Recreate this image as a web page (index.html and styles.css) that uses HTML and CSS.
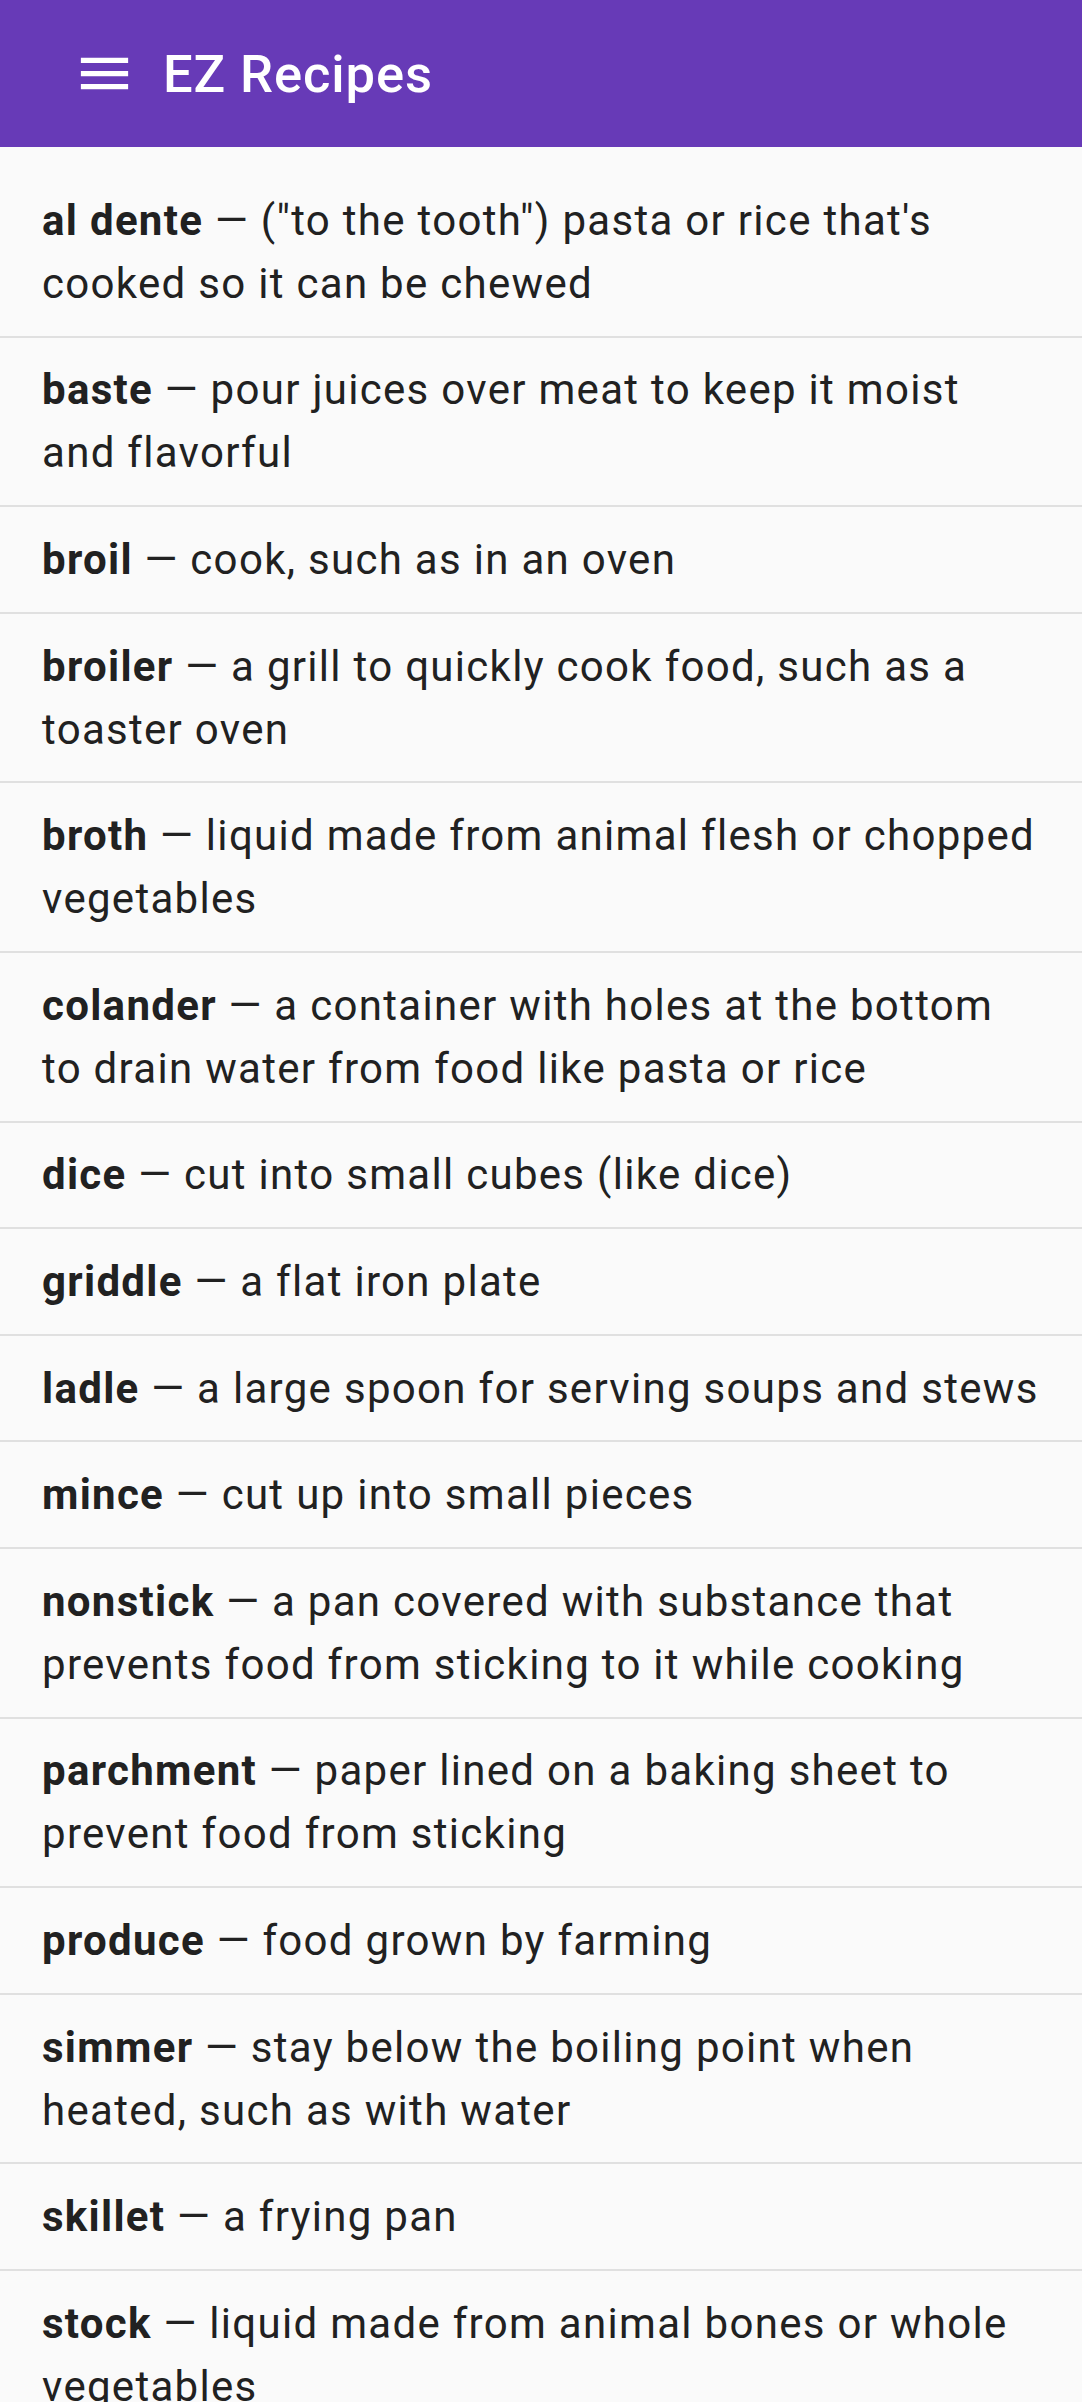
FILE: index.html
```html
<!DOCTYPE html>
<html lang="en">
<head>
<meta charset="utf-8">
<title>EZ Recipes</title>
<link rel="stylesheet" href="styles.css">
</head>
<body>
<header class="appbar">
  <button class="menu-btn" aria-label="Menu">
    <svg viewBox="0 0 24 24" width="63" height="63"><path d="M3 18h18v-2H3v2zm0-5h18v-2H3v2zm0-7v2h18V6H3z" fill="#ffffff"/></svg>
  </button>
  <h1 class="title">EZ Recipes</h1>
</header>
<main class="list">
  <div class="item"><b>al dente</b> — ("to the tooth") pasta or rice that's cooked so it can be chewed</div>
  <div class="item"><b>baste</b> — pour juices over meat to keep it moist and flavorful</div>
  <div class="item"><b>broil</b> — cook, such as in an oven</div>
  <div class="item"><b>broiler</b> — a grill to quickly cook food, such as a toaster oven</div>
  <div class="item"><b>broth</b> — liquid made from animal flesh or chopped vegetables</div>
  <div class="item"><b>colander</b> — a container with holes at the bottom to drain water from food like pasta or rice</div>
  <div class="item"><b>dice</b> — cut into small cubes (like dice)</div>
  <div class="item"><b>griddle</b> — a flat iron plate</div>
  <div class="item"><b>ladle</b> — a large spoon for serving soups and stews</div>
  <div class="item"><b>mince</b> — cut up into small pieces</div>
  <div class="item"><b>nonstick</b> — a pan covered with substance that prevents food from sticking to it while cooking</div>
  <div class="item"><b>parchment</b> — paper lined on a baking sheet to prevent food from sticking</div>
  <div class="item"><b>produce</b> — food grown by farming</div>
  <div class="item"><b>simmer</b> — stay below the boiling point when heated, such as with water</div>
  <div class="item"><b>skillet</b> — a frying pan</div>
  <div class="item"><b>stock</b> — liquid made from animal bones or whole vegetables</div>
</main>
</body>
</html>
```
FILE: styles.css
```css
html, body {
  margin: 0;
  padding: 0;
  background: #fafafa;
}
body {
  font-family: Roboto, "Noto Sans", sans-serif;
  color: #212121;
}
.appbar {
  height: 147px;
  background: #673ab7;
  display: flex;
  align-items: center;
  padding-left: 73px;
  box-sizing: border-box;
}
.menu-btn {
  background: none;
  border: 0;
  padding: 0;
  margin: 0;
  width: 63px;
  height: 63px;
  display: block;
}
.menu-btn svg {
  display: block;
}
.title {
  margin: 0 0 0 27px;
  font-size: 52.5px;
  font-weight: 500;
  color: #ffffff;
  letter-spacing: 0.9px;
}
.list {
  padding-top: 21px;
}
.item {
  padding: 20.8px 42px;
  font-size: 42px;
  line-height: 63px;
  letter-spacing: 1.3px;
  border-bottom: 2px solid #e0e0e0;
}
.item b {
  font-weight: 700;
  letter-spacing: 1.3px;
}
```
